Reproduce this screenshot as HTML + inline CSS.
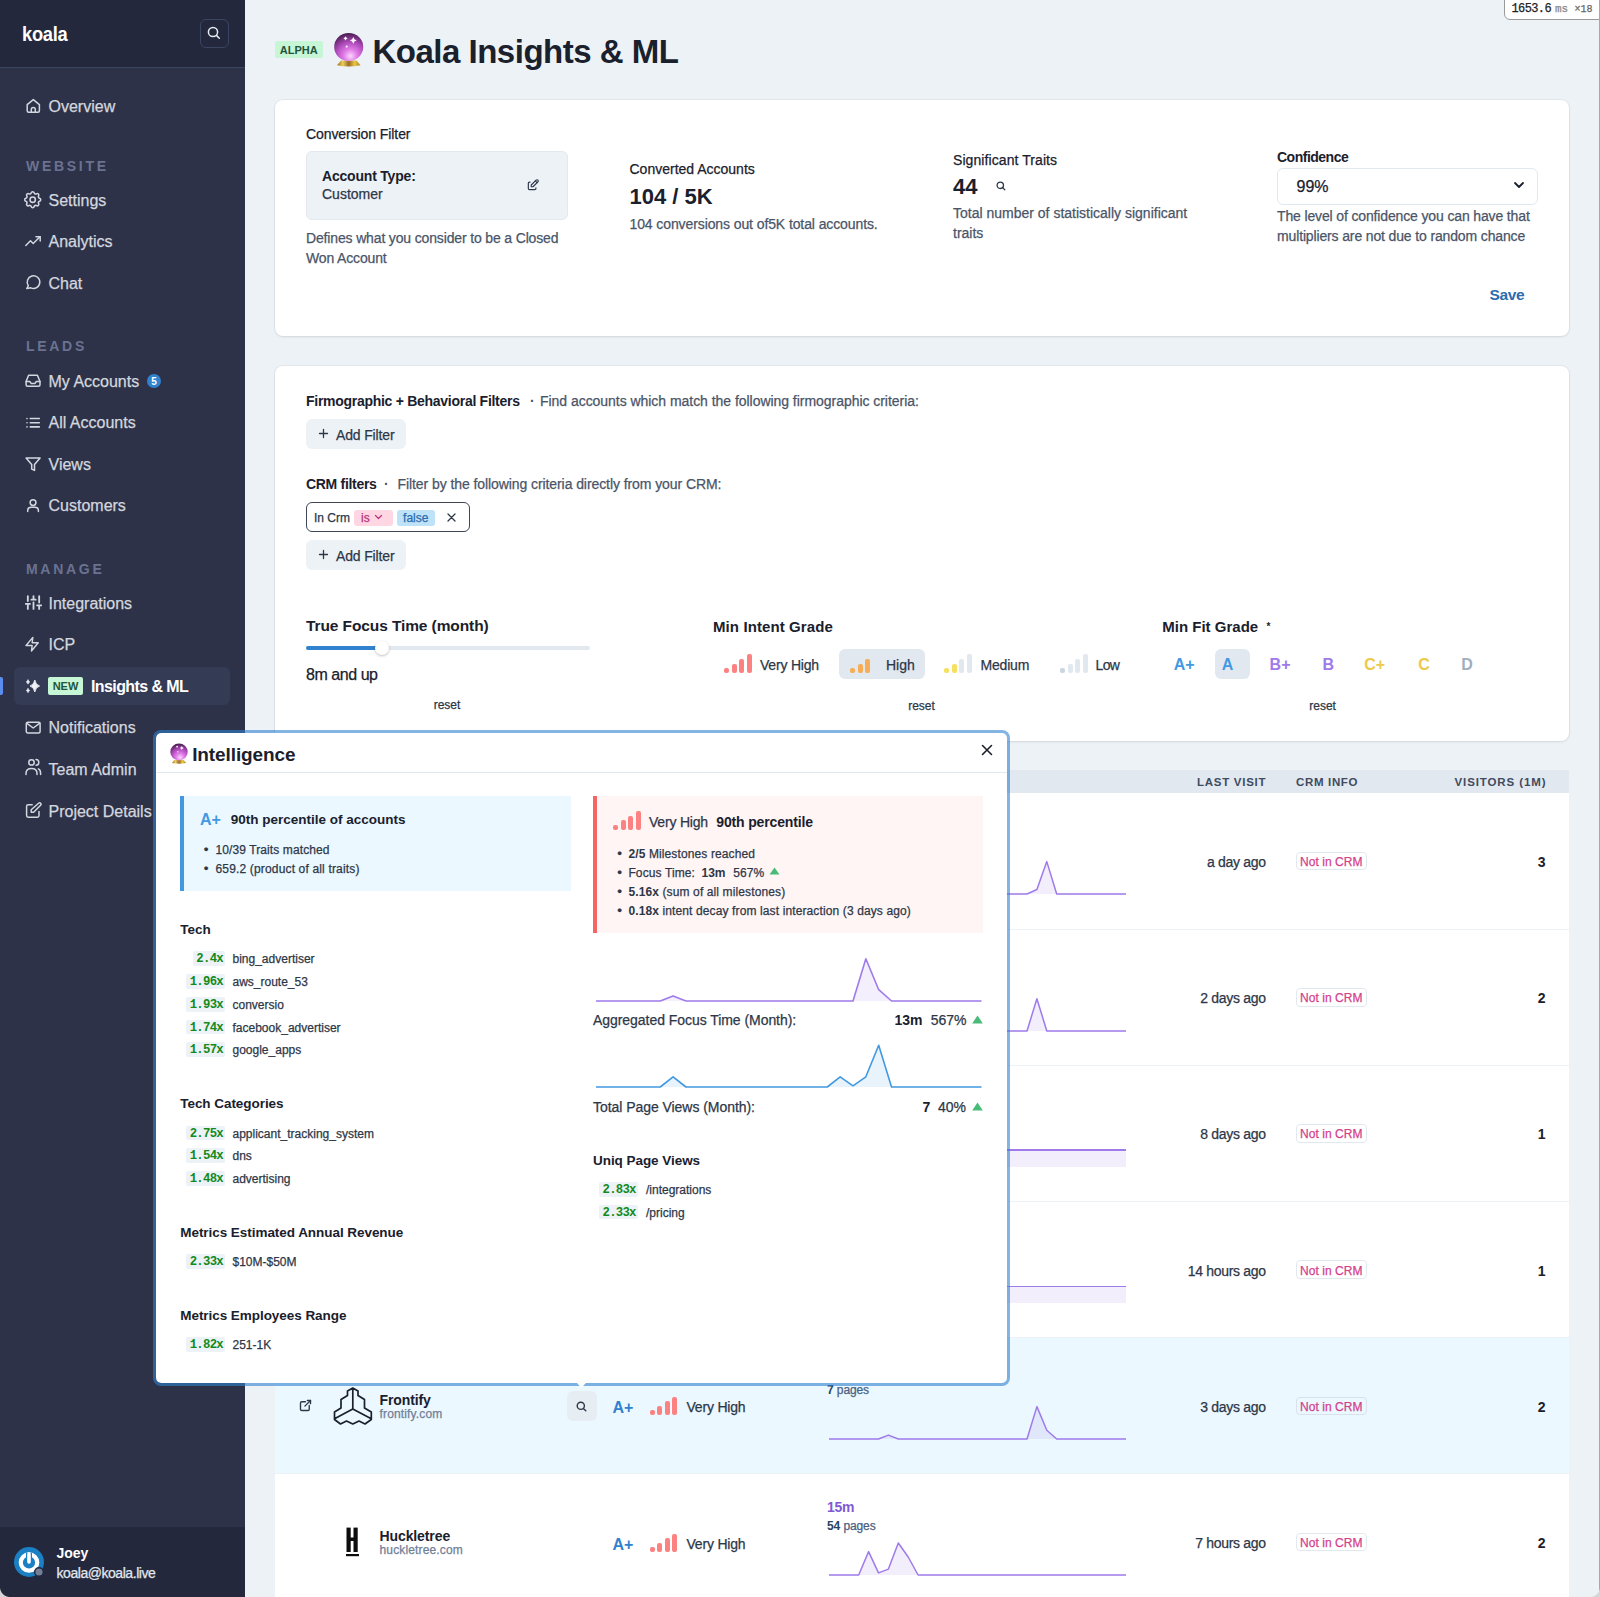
<!DOCTYPE html>
<html><head><meta charset="utf-8"><title>Koala Insights &amp; ML</title>
<style>
html,body{margin:0;padding:0;}
body{width:1600px;height:1597px;overflow:hidden;position:relative;background:#edf2f7;font-family:"Liberation Sans", sans-serif;-webkit-font-smoothing:antialiased;}
.t{position:absolute;line-height:1;white-space:nowrap;-webkit-text-stroke:0.25px currentColor;}
.r{position:absolute;display:block;}
b{font-weight:700;-webkit-text-stroke:0;}
.corner{position:absolute;width:10px;height:10px;}
</style></head><body>
<div id="page" style="position:absolute;left:0;top:0;width:1600px;height:1597px;overflow:hidden;">
<div class="r" style="left:0px;top:0px;width:245px;height:1597px;background:#2d3248;"></div>
<div class="r" style="left:0px;top:0px;width:245px;height:67px;background:#23283d;"></div>
<div class="r" style="left:0px;top:67px;width:245px;height:1px;background:#3a4561;"></div>
<div class="t" style="left:22px;top:23.87px;font-size:20px;color:#ffffff;font-weight:700;-webkit-text-stroke:0;letter-spacing:-0.3px;transform:scaleX(0.915);transform-origin:0 0;">koala</div>
<div class="r" style="left:199.5px;top:18.5px;width:29.5px;height:29.5px;background:transparent;border:1.3px solid #3a4562;border-radius:6px;box-sizing:border-box;"></div>
<svg class="r" style="left:207px;top:26px;" width="14" height="14" viewBox="0 0 14 14" fill="none"><circle cx="6" cy="6" r="4.6" stroke="#e8eaf0" stroke-width="1.5"/><path d="M9.4 9.4L12.3 12.3" stroke="#e8eaf0" stroke-width="1.5" stroke-linecap="round"/></svg>
<div class="t" style="left:26px;top:158.65px;font-size:14px;color:#6b7291;font-weight:700;-webkit-text-stroke:0;letter-spacing:2.7px;">WEBSITE</div>
<div class="t" style="left:26px;top:339.45px;font-size:14px;color:#6b7291;font-weight:700;-webkit-text-stroke:0;letter-spacing:2.7px;">LEADS</div>
<div class="t" style="left:26px;top:562.05px;font-size:14px;color:#6b7291;font-weight:700;-webkit-text-stroke:0;letter-spacing:2.7px;">MANAGE</div>
<div class="t" style="left:48.5px;top:99.16px;font-size:16px;color:#d4d7df;">Overview</div>
<div class="t" style="left:48.5px;top:192.86px;font-size:16px;color:#d4d7df;">Settings</div>
<div class="t" style="left:48.5px;top:234.36px;font-size:16px;color:#d4d7df;">Analytics</div>
<div class="t" style="left:48.5px;top:276.36px;font-size:16px;color:#d4d7df;">Chat</div>
<div class="t" style="left:48.5px;top:373.76px;font-size:16px;color:#d4d7df;">My Accounts</div>
<div class="t" style="left:48.5px;top:415.06px;font-size:16px;color:#d4d7df;">All Accounts</div>
<div class="t" style="left:48.5px;top:456.76px;font-size:16px;color:#d4d7df;">Views</div>
<div class="t" style="left:48.5px;top:498.36px;font-size:16px;color:#d4d7df;">Customers</div>
<div class="t" style="left:48.5px;top:595.86px;font-size:16px;color:#d4d7df;">Integrations</div>
<div class="t" style="left:48.5px;top:637.16px;font-size:16px;color:#d4d7df;">ICP</div>
<div class="t" style="left:48.5px;top:720.36px;font-size:16px;color:#d4d7df;">Notifications</div>
<div class="t" style="left:48.5px;top:762.36px;font-size:16px;color:#d4d7df;">Team Admin</div>
<div class="t" style="left:48.5px;top:803.86px;font-size:16px;color:#d4d7df;">Project Details</div>
<svg class="r" style="left:24px;top:96px" width="20" height="20" viewBox="0 0 20 20" fill="none" stroke="#d4d7df" stroke-width="1.5" stroke-linecap="round" stroke-linejoin="round"><path d="M3.2 8.6 L9.3 3.6 L15.4 8.6 V14.8 Q15.4 16.3 13.9 16.3 H4.7 Q3.2 16.3 3.2 14.8 Z"/><path d="M7.3 16.3 V13.6 A2 2 0 0 1 11.3 13.6 V16.3"/></svg>
<svg class="r" style="left:22.3px;top:188.8px" width="21.4" height="21.4" viewBox="0 0 24 24" fill="none" stroke="#d4d7df" stroke-width="1.75" stroke-linecap="round" stroke-linejoin="round"><path d="M10.325 4.317c.426-1.756 2.924-1.756 3.35 0a1.724 1.724 0 0 0 2.573 1.066c1.543-.94 3.31.826 2.37 2.37a1.724 1.724 0 0 0 1.065 2.572c1.756.426 1.756 2.924 0 3.35a1.724 1.724 0 0 0-1.066 2.573c.94 1.543-.826 3.31-2.37 2.37a1.724 1.724 0 0 0-2.572 1.065c-.426 1.756-2.924 1.756-3.35 0a1.724 1.724 0 0 0-2.573-1.066c-1.543.94-3.31-.826-2.37-2.37a1.724 1.724 0 0 0-1.065-2.572c-1.756-.426-1.756-2.924 0-3.35a1.724 1.724 0 0 0 1.066-2.573c-.94-1.543.826-3.31 2.37-2.37 1 .608 2.296.07 2.572-1.065z"/><circle cx="12" cy="12" r="3"/></svg>
<svg class="r" style="left:24px;top:232px" width="20" height="20" viewBox="0 0 20 20" fill="none" stroke="#d4d7df" stroke-width="1.5" stroke-linecap="round" stroke-linejoin="round"><path d="M1.8 13.5 L6.5 8.8 L9.2 11.5 L16 4.8"/><path d="M12 4.8 H16.2 V9"/></svg>
<svg class="r" style="left:24px;top:273px" width="20" height="20" viewBox="0 0 20 20" fill="none" stroke="#d4d7df" stroke-width="1.5" stroke-linecap="round" stroke-linejoin="round"><path d="M2.8 15.6 L4.34 12.71 A6.3 6.3 0 1 1 6.84 14.81 Z"/></svg>
<svg class="r" style="left:24px;top:372px" width="20" height="20" viewBox="0 0 20 20" fill="none" stroke="#d4d7df" stroke-width="1.5" stroke-linecap="round" stroke-linejoin="round"><path d="M4.6 3.2 H13.4 L16 9.5 V12.7 Q16 14.2 14.5 14.2 H3.6 Q2.1 14.2 2.1 12.7 V9.5 Z"/><path d="M2.1 9.5 H5.8 L7.3 11.6 H10.8 L12.3 9.5 H16"/></svg>
<svg class="r" style="left:24px;top:412px" width="20" height="20" viewBox="0 0 20 20" fill="none" stroke="#d4d7df" stroke-width="1.6" stroke-linecap="round" stroke-linejoin="round"><path d="M6.3 6.5 H15.3 M6.3 10.7 H15.3 M6.3 14.9 H15.3"/><path d="M3 6.5 V6.6 M3 10.7 V10.8 M3 14.9 V15"/></svg>
<svg class="r" style="left:24px;top:455px" width="20" height="20" viewBox="0 0 20 20" fill="none" stroke="#d4d7df" stroke-width="1.5" stroke-linecap="round" stroke-linejoin="round"><path d="M2.1 3 H16.1 L10.5 9.6 V15.4 L7.7 14.1 V9.6 Z"/></svg>
<svg class="r" style="left:24px;top:496px" width="20" height="20" viewBox="0 0 20 20" fill="none" stroke="#d4d7df" stroke-width="1.5" stroke-linecap="round" stroke-linejoin="round"><circle cx="9.05" cy="6.6" r="2.9"/><path d="M3.7 15.6 V14.6 Q3.7 11.3 7.2 11.3 H10.9 Q14.4 11.3 14.4 14.6 V15.6"/></svg>
<svg class="r" style="left:24.6px;top:594.1px" width="17" height="17" viewBox="0 0 24 24" fill="none" stroke="#d4d7df" stroke-width="2.6" stroke-linecap="round" stroke-linejoin="round"><path d="M4 21v-7M4 10V3M12 21v-9M12 8V3M20 21v-5M20 12V3M1 14h6M9 8h6M17 16h6"/></svg>
<svg class="r" style="left:24.26px;top:636.24px" width="16.3" height="16.3" viewBox="0 0 24 24" fill="none" stroke="#d4d7df" stroke-width="2.1" stroke-linecap="round" stroke-linejoin="round"><path d="M13 2 L3 14 H12 L11 22 L21 10 H12 L13 2 Z"/></svg>
<svg class="r" style="left:24px;top:719px" width="20" height="20" viewBox="0 0 20 20" fill="none" stroke="#d4d7df" stroke-width="1.5" stroke-linecap="round" stroke-linejoin="round"><rect x="2.3" y="3.3" width="13.8" height="10.7" rx="1.5"/><path d="M2.6 4.2 L9.2 9 L15.8 4.2"/></svg>
<svg class="r" style="left:24px;top:756px" width="20" height="20" viewBox="0 0 20 20" fill="none" stroke="#d4d7df" stroke-width="1.5" stroke-linecap="round" stroke-linejoin="round"><circle cx="7.5" cy="6.4" r="2.7"/><path d="M2 18.6 V17.6 Q2 12.6 7.5 12.6 Q13 12.6 13 17.6 V18.6"/><path d="M12 3.6 A2.8 2.8 0 0 1 12 9.2"/><path d="M14.4 12.9 Q16.6 13.8 16.6 17.4 V18.6"/></svg>
<svg class="r" style="left:24px;top:800px" width="20" height="20" viewBox="0 0 20 20" fill="none" stroke="#d4d7df" stroke-width="1.5" stroke-linecap="round" stroke-linejoin="round"><path d="M8.2 4.8 H4.2 Q2.6 4.8 2.6 6.4 V15.6 Q2.6 17.2 4.2 17.2 H13.4 Q15 17.2 15 15.6 V11.4"/><path d="M14.6 3.2 Q15.6 2.2 16.6 3.2 Q17.6 4.2 16.6 5.2 L9.6 12.2 H7.2 V9.8 Z"/></svg>
<div class="r" style="left:147px;top:374px;width:14px;height:14px;background:#3182ce;border-radius:7px;"></div>
<div class="t" style="left:-46px;width:400px;text-align:center;top:376.64px;font-size:10px;color:#ffffff;font-weight:700;-webkit-text-stroke:0;">5</div>
<div class="r" style="left:14px;top:667px;width:215.5px;height:37.5px;background:#333b55;border-radius:6px;"></div>
<div class="r" style="left:0px;top:677px;width:3px;height:18px;background:#5b8def;border-radius:0 2px 2px 0;"></div>
<svg class="r" style="left:24px;top:677px;" width="18" height="18" viewBox="0 0 18 18" fill="none"><path d="M10.8 3 Q11.6 7.9 15.6 9 Q11.6 10.1 10.8 15 Q10 10.1 6 9 Q10 7.9 10.8 3Z" fill="#f2f3f7" stroke="#f2f3f7" stroke-width="0.9" stroke-linejoin="round"/><path d="M4 2.6 Q4.4 4.5 5.8 4.9 Q4.4 5.3 4 7.2 Q3.6 5.3 2.2 4.9 Q3.6 4.5 4 2.6Z" fill="#f2f3f7" stroke="#f2f3f7" stroke-width="0.6"/><path d="M4 11.2 Q4.4 13.1 5.8 13.5 Q4.4 13.9 4 15.8 Q3.6 13.9 2.2 13.5 Q3.6 13.1 4 11.2Z" fill="#f2f3f7" stroke="#f2f3f7" stroke-width="0.6"/></svg>
<div class="r" style="left:48px;top:677px;width:35px;height:17.5px;background:#c6f6d5;border-radius:2px;"></div>
<div class="t" style="left:-134.5px;width:400px;text-align:center;top:681.29px;font-size:11px;color:#22543d;font-weight:700;-webkit-text-stroke:0;">NEW</div>
<div class="t" style="left:91px;top:678.76px;font-size:16px;color:#ffffff;font-weight:700;-webkit-text-stroke:0;letter-spacing:-0.6px;">Insights &amp; ML</div>
<div class="r" style="left:0px;top:1526.5px;width:245px;height:71px;background:#23283d;"></div>
<svg class="r" style="left:14px;top:1547px;" width="31" height="31" viewBox="0 0 31 31" fill="none"><circle cx="15" cy="15" r="15" fill="#1b7fc4"/><circle cx="15" cy="15.5" r="8.2" stroke="#ffffff" stroke-width="4.2"/><path d="M15 6v9" stroke="#1b7fc4" stroke-width="6"/><path d="M15 7v8" stroke="#ffffff" stroke-width="3.6" stroke-linecap="round"/><circle cx="25" cy="25" r="4.3" fill="#718096" stroke="#23283d" stroke-width="1.5"/></svg>
<div class="t" style="left:56.5px;top:1546.25px;font-size:14px;color:#ffffff;font-weight:700;-webkit-text-stroke:0;">Joey</div>
<div class="t" style="left:56.5px;top:1565.75px;font-size:14px;color:#e2e8f0;letter-spacing:-0.45px;">koala@koala.live</div>
<div class="r" style="left:275px;top:41px;width:47.5px;height:16.5px;background:#c6f6d5;border-radius:2px;"></div>
<div class="t" style="left:98.75px;width:400px;text-align:center;top:44.89px;font-size:11px;color:#22543d;font-weight:700;-webkit-text-stroke:0;">ALPHA</div>
<svg class="r" style="left:331.5px;top:32px;" width="34" height="36" viewBox="0 0 34 36" fill="none"><defs><radialGradient id="tb" cx="0.56" cy="0.82" r="0.8"><stop offset="0" stop-color="#fbd6fc"/><stop offset="0.3" stop-color="#e07be6"/><stop offset="0.62" stop-color="#b04bbd"/><stop offset="0.9" stop-color="#6a2a72"/><stop offset="1" stop-color="#4a1f52"/></radialGradient><linearGradient id="tg" x1="0" y1="0" x2="1" y2="0"><stop offset="0" stop-color="#a8681a"/><stop offset="0.25" stop-color="#e8d060"/><stop offset="0.5" stop-color="#9c6a24"/><stop offset="0.75" stop-color="#e6c84a"/><stop offset="1" stop-color="#b08420"/></linearGradient></defs><path d="M9 28.4 L24.5 28.4 L28.5 33.2 Q16.8 35.6 5 33.2 Z" fill="url(#tg)"/><ellipse cx="16.7" cy="15" rx="14.5" ry="14" fill="url(#tb)"/><path d="M13.5 4.3 l0.8 1.3 1.3 0.8 -1.3 0.8 -0.8 1.3 -0.8 -1.3 -1.3 -0.8 1.3 -0.8z" fill="#fff"/><path d="M21.3 5 l1.2 2.2 2.2 1.2 -2.2 1.2 -1.2 2.2 -1.2 -2.2 -2.2 -1.2 2.2 -1.2z" fill="#fff" opacity="0.95"/><circle cx="14.7" cy="14.6" r="1.1" fill="#fff" opacity="0.9"/></svg>
<div class="t" style="left:372.5px;top:35.17px;font-size:33px;color:#1a202c;font-weight:700;-webkit-text-stroke:0;letter-spacing:-0.5px;">Koala Insights &amp; ML</div>
<div class="r" style="left:275px;top:100px;width:1293.5px;height:235.5px;background:#fff;background:#fff;border-radius:8px;box-shadow:0 0 0 1px rgba(0,0,0,0.04),0 1px 3px rgba(0,0,0,0.08);"></div>
<div class="t" style="left:306px;top:126.75px;font-size:14px;color:#1a202c;letter-spacing:-0.08px;">Conversion Filter</div>
<div class="r" style="left:306px;top:150.5px;width:262px;height:69px;background:#edf2f7;border:1px solid #e2e8f0;border-radius:6px;box-sizing:border-box;"></div>
<div class="t" style="left:322px;top:169.35px;font-size:14px;color:#1a202c;font-weight:700;-webkit-text-stroke:0;letter-spacing:-0.2px;">Account Type:</div>
<div class="t" style="left:322px;top:187.25px;font-size:14px;color:#2d3748;">Customer</div>
<svg class="r" style="left:526px;top:178px;" width="14" height="14" viewBox="0 0 24 24" fill="none" stroke="#2d3748" stroke-width="2" stroke-linecap="round" stroke-linejoin="round"><path d="M7 7H6a2 2 0 0 0-2 2v9a2 2 0 0 0 2 2h9a2 2 0 0 0 2-2v-1"/><path d="M20.385 6.585a2.1 2.1 0 0 0-2.97-2.97L9 12v3h3l8.385-8.415z"/><path d="M16 5l3 3"/></svg>
<div class="t" style="left:306px;top:230.95px;font-size:14px;color:#4a5568;letter-spacing:-0.15px;">Defines what you consider to be a Closed</div>
<div class="t" style="left:306px;top:250.75px;font-size:14px;color:#4a5568;letter-spacing:-0.15px;">Won Account</div>
<div class="t" style="left:629.5px;top:162.15px;font-size:14px;color:#1a202c;">Converted Accounts</div>
<div class="t" style="left:629.5px;top:185.78px;font-size:22px;color:#1a202c;font-weight:700;-webkit-text-stroke:0;">104 / 5K</div>
<div class="t" style="left:629.5px;top:216.05px;font-size:14px;color:#4a5568;letter-spacing:-0.1px;margin-top:1px;">104 conversions out of5K total accounts.</div>
<div class="t" style="left:953px;top:152.95px;font-size:14px;color:#1a202c;letter-spacing:0.08px;">Significant Traits</div>
<div class="t" style="left:953px;top:175.78px;font-size:22px;color:#1a202c;font-weight:700;-webkit-text-stroke:0;">44</div>
<svg class="r" style="left:996px;top:181px;" width="10" height="10" viewBox="0 0 10 10" fill="none"><circle cx="4.3" cy="4.3" r="3.2" stroke="#2d3748" stroke-width="1.3"/><path d="M6.6 6.6L8.8 8.8" stroke="#2d3748" stroke-width="1.3" stroke-linecap="round"/></svg>
<div class="t" style="left:953px;top:206.05px;font-size:14px;color:#4a5568;">Total number of statistically significant</div>
<div class="t" style="left:953px;top:225.95px;font-size:14px;color:#4a5568;">traits</div>
<div class="t" style="left:1277px;top:150.35px;font-size:14px;color:#1a202c;font-weight:700;-webkit-text-stroke:0;letter-spacing:-0.5px;">Confidence</div>
<div class="r" style="left:1277px;top:168px;width:261px;height:36.5px;background:#fff;border:1px solid #e2e8f0;border-radius:6px;box-sizing:border-box;"></div>
<div class="t" style="left:1296.5px;top:178.66px;font-size:16px;color:#1a202c;">99%</div>
<svg class="r" style="left:1513px;top:181px;" width="12" height="9" viewBox="0 0 12 9" fill="none"><path d="M2 2L6 6L10 2" stroke="#1a202c" stroke-width="1.8" stroke-linecap="round" stroke-linejoin="round"/></svg>
<div class="t" style="left:1277px;top:209.05px;font-size:14px;color:#4a5568;letter-spacing:-0.14px;">The level of confidence you can have that</div>
<div class="t" style="left:1277px;top:229.05px;font-size:14px;color:#4a5568;letter-spacing:-0.14px;">multipliers are not due to random chance</div>
<div class="t" style="left:1489.5px;top:287.28px;font-size:15.5px;color:#2b6cb0;font-weight:700;-webkit-text-stroke:0;letter-spacing:-0.4px;">Save</div>
<div class="r" style="left:275px;top:366px;width:1293.5px;height:374.5px;background:#fff;background:#fff;border-radius:8px;box-shadow:0 0 0 1px rgba(0,0,0,0.04),0 1px 3px rgba(0,0,0,0.08);"></div>
<div class="t" style="left:306px;top:393.75px;font-size:14px;color:#1a202c;font-weight:700;-webkit-text-stroke:0;letter-spacing:-0.28px;">Firmographic + Behavioral Filters</div>
<div class="t" style="left:530px;top:393.75px;font-size:14px;color:#4a5568;font-weight:700;-webkit-text-stroke:0;">·</div>
<div class="t" style="left:540px;top:393.75px;font-size:14px;color:#4a5568;letter-spacing:-0.04px;">Find accounts which match the following firmographic criteria:</div>
<div class="r" style="left:306px;top:419px;width:100px;height:30px;background:#edf2f7;border-radius:6px;"></div>
<svg class="r" style="left:318px;top:428px;" width="11" height="11" viewBox="0 0 11 11" fill="none"><path d="M5.5 1.5v8M1.5 5.5h8" stroke="#2d3748" stroke-width="1.3" stroke-linecap="round"/></svg>
<div class="t" style="left:336px;top:427.75px;font-size:14px;color:#2d3748;letter-spacing:-0.15px;">Add Filter</div>
<div class="t" style="left:306px;top:477.25px;font-size:14px;color:#1a202c;font-weight:700;-webkit-text-stroke:0;letter-spacing:-0.3px;">CRM filters</div>
<div class="t" style="left:384px;top:477.25px;font-size:14px;color:#4a5568;font-weight:700;-webkit-text-stroke:0;">·</div>
<div class="t" style="left:397.5px;top:477.25px;font-size:14px;color:#4a5568;letter-spacing:-0.08px;">Filter by the following criteria directly from your CRM:</div>
<div class="r" style="left:306px;top:502px;width:163.5px;height:30px;background:#fff;border:1.5px solid #3d4757;border-radius:6px;box-sizing:border-box;"></div>
<div class="t" style="left:314px;top:511.94px;font-size:12px;color:#2d3748;">In Crm</div>
<div class="r" style="left:354px;top:509.5px;width:38.5px;height:16px;background:#fed7e2;border-radius:3px;"></div>
<div class="t" style="left:361px;top:511.94px;font-size:12px;color:#b83280;">is</div>
<svg class="r" style="left:374px;top:513px;" width="9" height="8" viewBox="0 0 9 8" fill="none"><path d="M1.5 2.5L4.5 5.5L7.5 2.5" stroke="#b83280" stroke-width="1.2" stroke-linecap="round" stroke-linejoin="round"/></svg>
<div class="r" style="left:397px;top:509.5px;width:37.5px;height:16px;background:#bee3f8;border-radius:3px;"></div>
<div class="t" style="left:215.75px;width:400px;text-align:center;top:511.94px;font-size:12px;color:#2b6cb0;">false</div>
<svg class="r" style="left:446px;top:512px;" width="11" height="11" viewBox="0 0 11 11" fill="none"><path d="M2 2L9 9M9 2L2 9" stroke="#2d3748" stroke-width="1.3" stroke-linecap="round"/></svg>
<div class="r" style="left:306px;top:540px;width:100px;height:30px;background:#edf2f7;border-radius:6px;"></div>
<svg class="r" style="left:318px;top:549px;" width="11" height="11" viewBox="0 0 11 11" fill="none"><path d="M5.5 1.5v8M1.5 5.5h8" stroke="#2d3748" stroke-width="1.3" stroke-linecap="round"/></svg>
<div class="t" style="left:336px;top:548.75px;font-size:14px;color:#2d3748;letter-spacing:-0.15px;">Add Filter</div>
<div class="t" style="left:306px;top:618.48px;font-size:15.5px;color:#1a202c;font-weight:700;-webkit-text-stroke:0;letter-spacing:-0.1px;">True Focus Time (month)</div>
<div class="r" style="left:306px;top:646px;width:283.5px;height:4px;background:#e2e8f0;border-radius:2px;"></div>
<div class="r" style="left:306px;top:646px;width:75px;height:4px;background:#3182ce;border-radius:2px;"></div>
<div class="r" style="left:374.5px;top:641px;width:14px;height:14px;background:#fff;border-radius:7px;box-shadow:0 1px 2.5px rgba(0,0,0,0.25);"></div>
<div class="t" style="left:306px;top:666.56px;font-size:16px;color:#1a202c;letter-spacing:-0.45px;">8m and up</div>
<div class="t" style="left:247px;width:400px;text-align:center;top:699.04px;font-size:12px;color:#2d3748;">reset</div>
<div class="t" style="left:713px;top:618.50px;font-size:15px;color:#1a202c;font-weight:700;-webkit-text-stroke:0;letter-spacing:0.1px;">Min Intent Grade</div>
<div class="r" style="left:724.0px;top:668px;width:5.3px;height:5px;background:#fc8181;border-radius:2px;"></div>
<div class="r" style="left:731.5px;top:663.6px;width:5.3px;height:9.4px;background:#fc8181;border-radius:2px;"></div>
<div class="r" style="left:739.0px;top:659px;width:5.3px;height:14px;background:#fc8181;border-radius:2px;"></div>
<div class="r" style="left:746.5px;top:654.4px;width:5.3px;height:18.6px;background:#fc8181;border-radius:2px;"></div>
<div class="t" style="left:760px;top:658.15px;font-size:14px;color:#2d3748;letter-spacing:-0.2px;">Very High</div>
<div class="r" style="left:838.5px;top:649px;width:86.5px;height:30px;background:#e2e8f0;border-radius:6px;"></div>
<div class="r" style="left:850.0px;top:668px;width:5.3px;height:5px;background:#f6ad55;border-radius:2px;"></div>
<div class="r" style="left:857.5px;top:663.6px;width:5.3px;height:9.4px;background:#f6ad55;border-radius:2px;"></div>
<div class="r" style="left:865.0px;top:659px;width:5.3px;height:14px;background:#f6ad55;border-radius:2px;"></div>
<div class="r" style="left:872.5px;top:654.4px;width:5.3px;height:18.6px;background:#e2e8f0;border-radius:2px;"></div>
<div class="t" style="left:886px;top:658.15px;font-size:14px;color:#2d3748;">High</div>
<div class="r" style="left:944.0px;top:668px;width:5.3px;height:5px;background:#f6e05e;border-radius:2px;"></div>
<div class="r" style="left:951.5px;top:663.6px;width:5.3px;height:9.4px;background:#f6e05e;border-radius:2px;"></div>
<div class="r" style="left:959.0px;top:659px;width:5.3px;height:14px;background:#e2e8f0;border-radius:2px;"></div>
<div class="r" style="left:966.5px;top:654.4px;width:5.3px;height:18.6px;background:#e2e8f0;border-radius:2px;"></div>
<div class="t" style="left:980.5px;top:658.15px;font-size:14px;color:#2d3748;letter-spacing:-0.2px;">Medium</div>
<div class="r" style="left:1060.0px;top:668px;width:5.3px;height:5px;background:#cbd5e0;border-radius:2px;"></div>
<div class="r" style="left:1067.5px;top:663.6px;width:5.3px;height:9.4px;background:#e2e8f0;border-radius:2px;"></div>
<div class="r" style="left:1075.0px;top:659px;width:5.3px;height:14px;background:#e2e8f0;border-radius:2px;"></div>
<div class="r" style="left:1082.5px;top:654.4px;width:5.3px;height:18.6px;background:#e2e8f0;border-radius:2px;"></div>
<div class="t" style="left:1095.5px;top:658.15px;font-size:14px;color:#2d3748;letter-spacing:-0.6px;">Low</div>
<div class="t" style="left:721.5px;width:400px;text-align:center;top:700.04px;font-size:12px;color:#2d3748;">reset</div>
<div class="t" style="left:1162.3px;top:618.80px;font-size:15px;color:#1a202c;font-weight:700;-webkit-text-stroke:0;">Min Fit Grade</div>
<div class="t" style="left:1266.5px;top:622.13px;font-size:10px;color:#1a202c;font-weight:700;-webkit-text-stroke:0;">*</div>
<div class="r" style="left:1215px;top:649px;width:35px;height:30px;background:#e2e8f0;border-radius:6px;"></div>
<div class="t" style="left:1173.8px;top:657.46px;font-size:16px;color:#4299e1;font-weight:700;-webkit-text-stroke:0;">A+</div>
<div class="t" style="left:1221.7px;top:657.46px;font-size:16px;color:#4299e1;font-weight:700;-webkit-text-stroke:0;">A</div>
<div class="t" style="left:1269.6px;top:657.46px;font-size:16px;color:#9f7aea;font-weight:700;-webkit-text-stroke:0;">B+</div>
<div class="t" style="left:1322.5px;top:657.46px;font-size:16px;color:#9f7aea;font-weight:700;-webkit-text-stroke:0;">B</div>
<div class="t" style="left:1364.2px;top:657.46px;font-size:16px;color:#ecc94b;font-weight:700;-webkit-text-stroke:0;">C+</div>
<div class="t" style="left:1418.2px;top:657.46px;font-size:16px;color:#ecc94b;font-weight:700;-webkit-text-stroke:0;">C</div>
<div class="t" style="left:1461.3px;top:657.46px;font-size:16px;color:#a0aec0;font-weight:700;-webkit-text-stroke:0;">D</div>
<div class="t" style="left:1122.6px;width:400px;text-align:center;top:700.04px;font-size:12px;color:#2d3748;">reset</div>
<div class="r" style="left:275px;top:770px;width:1293.5px;height:23px;background:#e2e8f0;"></div>
<div class="t" style="right:334.5px;top:776.87px;font-size:11.5px;color:#3f4b5e;font-weight:700;-webkit-text-stroke:0;letter-spacing:0.72px;margin-right:-0.7px;">LAST VISIT</div>
<div class="t" style="left:1296px;top:776.87px;font-size:11.5px;color:#3f4b5e;font-weight:700;-webkit-text-stroke:0;letter-spacing:0.66px;">CRM INFO</div>
<div class="t" style="right:54.5px;top:776.87px;font-size:11.5px;color:#3f4b5e;font-weight:700;-webkit-text-stroke:0;letter-spacing:0.89px;margin-right:-0.9px;">VISITORS (1M)</div>
<div class="r" style="left:275px;top:793px;width:1293.5px;height:136.5px;background:#ffffff;"></div>
<div class="r" style="left:275px;top:928.5px;width:1293.5px;height:1px;background:#edf2f7;"></div>
<div class="t" style="right:334.5px;top:855.00px;font-size:14px;color:#2d3748;letter-spacing:-0.3px;margin-right:-0.3px;">a day ago</div>
<div class="r" style="left:1296px;top:851.75px;width:70.5px;height:18.5px;background:transparent;border:1px solid #e2e8f0;border-radius:4px;box-sizing:border-box;background:#fff;"></div>
<div class="t" style="left:1131.25px;width:400px;text-align:center;top:856.09px;font-size:12px;color:#d53f8c;letter-spacing:0.05px;">Not in CRM</div>
<div class="t" style="right:54.5px;top:855.00px;font-size:14px;color:#1a202c;font-weight:700;-webkit-text-stroke:0;">3</div>
<svg class="r" style="left:827.6px;top:844.35px" width="299" height="54" fill="none"><path d="M1.00,50.00 L10.90,50.00 L20.80,50.00 L30.70,50.00 L40.60,50.00 L50.50,50.00 L60.40,50.00 L70.30,50.00 L80.20,50.00 L90.10,50.00 L100.00,50.00 L109.90,50.00 L119.80,50.00 L129.70,50.00 L139.60,50.00 L149.50,50.00 L159.40,50.00 L169.30,50.00 L179.20,50.00 L189.10,50.00 L199.00,50.00 L208.90,45.50 L218.80,17.60 L228.70,50.00 L238.60,50.00 L248.50,50.00 L258.40,50.00 L268.30,50.00 L278.20,50.00 L288.10,50.00 L298.00,50.00 L298.00,50 L1,50 Z" fill="rgba(128,90,213,0.1)"/><path d="M1.00,50.00 L10.90,50.00 L20.80,50.00 L30.70,50.00 L40.60,50.00 L50.50,50.00 L60.40,50.00 L70.30,50.00 L80.20,50.00 L90.10,50.00 L100.00,50.00 L109.90,50.00 L119.80,50.00 L129.70,50.00 L139.60,50.00 L149.50,50.00 L159.40,50.00 L169.30,50.00 L179.20,50.00 L189.10,50.00 L199.00,50.00 L208.90,45.50 L218.80,17.60 L228.70,50.00 L238.60,50.00 L248.50,50.00 L258.40,50.00 L268.30,50.00 L278.20,50.00 L288.10,50.00 L298.00,50.00" stroke="#9f7aea" stroke-width="1.5" stroke-linejoin="round"/></svg>
<div class="r" style="left:299.5px;top:855.25px;width:12px;height:12px;background:transparent;"></div>
<div class="r" style="left:275px;top:929.5px;width:1293.5px;height:136.0px;background:#ffffff;"></div>
<div class="r" style="left:275px;top:1064.5px;width:1293.5px;height:1px;background:#edf2f7;"></div>
<div class="t" style="right:334.5px;top:991.25px;font-size:14px;color:#2d3748;letter-spacing:-0.3px;margin-right:-0.3px;">2 days ago</div>
<div class="r" style="left:1296px;top:988.0px;width:70.5px;height:18.5px;background:transparent;border:1px solid #e2e8f0;border-radius:4px;box-sizing:border-box;background:#fff;"></div>
<div class="t" style="left:1131.25px;width:400px;text-align:center;top:992.34px;font-size:12px;color:#d53f8c;letter-spacing:0.05px;">Not in CRM</div>
<div class="t" style="right:54.5px;top:991.25px;font-size:14px;color:#1a202c;font-weight:700;-webkit-text-stroke:0;">2</div>
<svg class="r" style="left:827.6px;top:980.5999999999999px" width="299" height="54" fill="none"><path d="M1.00,50.00 L10.90,50.00 L20.80,50.00 L30.70,50.00 L40.60,50.00 L50.50,50.00 L60.40,50.00 L70.30,50.00 L80.20,50.00 L90.10,50.00 L100.00,50.00 L109.90,50.00 L119.80,50.00 L129.70,50.00 L139.60,50.00 L149.50,50.00 L159.40,50.00 L169.30,50.00 L179.20,50.00 L189.10,50.00 L199.00,50.00 L208.90,17.70 L218.80,50.00 L228.70,50.00 L238.60,50.00 L248.50,50.00 L258.40,50.00 L268.30,50.00 L278.20,50.00 L288.10,50.00 L298.00,50.00 L298.00,50 L1,50 Z" fill="rgba(128,90,213,0.1)"/><path d="M1.00,50.00 L10.90,50.00 L20.80,50.00 L30.70,50.00 L40.60,50.00 L50.50,50.00 L60.40,50.00 L70.30,50.00 L80.20,50.00 L90.10,50.00 L100.00,50.00 L109.90,50.00 L119.80,50.00 L129.70,50.00 L139.60,50.00 L149.50,50.00 L159.40,50.00 L169.30,50.00 L179.20,50.00 L189.10,50.00 L199.00,50.00 L208.90,17.70 L218.80,50.00 L228.70,50.00 L238.60,50.00 L248.50,50.00 L258.40,50.00 L268.30,50.00 L278.20,50.00 L288.10,50.00 L298.00,50.00" stroke="#9f7aea" stroke-width="1.5" stroke-linejoin="round"/></svg>
<div class="r" style="left:299.5px;top:991.5px;width:12px;height:12px;background:transparent;"></div>
<div class="r" style="left:275px;top:1065.5px;width:1293.5px;height:136.0px;background:#ffffff;"></div>
<div class="r" style="left:275px;top:1200.5px;width:1293.5px;height:1px;background:#edf2f7;"></div>
<div class="t" style="right:334.5px;top:1127.25px;font-size:14px;color:#2d3748;letter-spacing:-0.3px;margin-right:-0.3px;">8 days ago</div>
<div class="r" style="left:1296px;top:1124.0px;width:70.5px;height:18.5px;background:transparent;border:1px solid #e2e8f0;border-radius:4px;box-sizing:border-box;background:#fff;"></div>
<div class="t" style="left:1131.25px;width:400px;text-align:center;top:1128.34px;font-size:12px;color:#d53f8c;letter-spacing:0.05px;">Not in CRM</div>
<div class="t" style="right:54.5px;top:1127.25px;font-size:14px;color:#1a202c;font-weight:700;-webkit-text-stroke:0;">1</div>
<div class="r" style="left:827px;top:1150.0px;width:299px;height:17px;background:rgba(128,90,213,0.1);"></div>
<div class="r" style="left:827px;top:1149.3px;width:299px;height:1.5px;background:#9f7aea;"></div>
<div class="r" style="left:299.5px;top:1127.5px;width:12px;height:12px;background:transparent;"></div>
<div class="r" style="left:275px;top:1201.5px;width:1293.5px;height:136.5px;background:#ffffff;"></div>
<div class="r" style="left:275px;top:1337px;width:1293.5px;height:1px;background:#edf2f7;"></div>
<div class="t" style="right:334.5px;top:1263.50px;font-size:14px;color:#2d3748;letter-spacing:-0.3px;margin-right:-0.3px;">14 hours ago</div>
<div class="r" style="left:1296px;top:1260.25px;width:70.5px;height:18.5px;background:transparent;border:1px solid #e2e8f0;border-radius:4px;box-sizing:border-box;background:#fff;"></div>
<div class="t" style="left:1131.25px;width:400px;text-align:center;top:1264.59px;font-size:12px;color:#d53f8c;letter-spacing:0.05px;">Not in CRM</div>
<div class="t" style="right:54.5px;top:1263.50px;font-size:14px;color:#1a202c;font-weight:700;-webkit-text-stroke:0;">1</div>
<div class="r" style="left:827px;top:1286.25px;width:299px;height:17px;background:rgba(128,90,213,0.1);"></div>
<div class="r" style="left:827px;top:1285.55px;width:299px;height:1.5px;background:#9f7aea;"></div>
<div class="r" style="left:299.5px;top:1263.75px;width:12px;height:12px;background:transparent;"></div>
<div class="r" style="left:275px;top:1338px;width:1293.5px;height:136px;background:#ebf8ff;"></div>
<div class="r" style="left:275px;top:1473px;width:1293.5px;height:1px;background:#edf2f7;"></div>
<div class="t" style="right:334.5px;top:1399.75px;font-size:14px;color:#2d3748;letter-spacing:-0.3px;margin-right:-0.3px;">3 days ago</div>
<div class="r" style="left:1296px;top:1396.5px;width:70.5px;height:18.5px;background:transparent;border:1px solid #d9e2ec;border-radius:4px;box-sizing:border-box;"></div>
<div class="t" style="left:1131.25px;width:400px;text-align:center;top:1400.84px;font-size:12px;color:#d53f8c;letter-spacing:0.05px;">Not in CRM</div>
<div class="t" style="right:54.5px;top:1399.75px;font-size:14px;color:#1a202c;font-weight:700;-webkit-text-stroke:0;">2</div>
<svg class="r" style="left:827.6px;top:1389.1px" width="299" height="54" fill="none"><path d="M1.00,50.00 L10.90,50.00 L20.80,50.00 L30.70,50.00 L40.60,50.00 L50.50,50.00 L60.40,46.10 L70.30,50.00 L80.20,50.00 L90.10,50.00 L100.00,50.00 L109.90,50.00 L119.80,50.00 L129.70,50.00 L139.60,50.00 L149.50,50.00 L159.40,50.00 L169.30,50.00 L179.20,50.00 L189.10,50.00 L199.00,50.00 L208.90,17.60 L218.80,41.30 L228.70,50.00 L238.60,50.00 L248.50,50.00 L258.40,50.00 L268.30,50.00 L278.20,50.00 L288.10,50.00 L298.00,50.00 L298.00,50 L1,50 Z" fill="rgba(128,90,213,0.1)"/><path d="M1.00,50.00 L10.90,50.00 L20.80,50.00 L30.70,50.00 L40.60,50.00 L50.50,50.00 L60.40,46.10 L70.30,50.00 L80.20,50.00 L90.10,50.00 L100.00,50.00 L109.90,50.00 L119.80,50.00 L129.70,50.00 L139.60,50.00 L149.50,50.00 L159.40,50.00 L169.30,50.00 L179.20,50.00 L189.10,50.00 L199.00,50.00 L208.90,17.60 L218.80,41.30 L228.70,50.00 L238.60,50.00 L248.50,50.00 L258.40,50.00 L268.30,50.00 L278.20,50.00 L288.10,50.00 L298.00,50.00" stroke="#9f7aea" stroke-width="1.5" stroke-linejoin="round"/></svg>
<div class="r" style="left:299.5px;top:1400.0px;width:12px;height:12px;background:transparent;"></div>
<div class="r" style="left:275px;top:1474px;width:1293.5px;height:136px;background:#ffffff;"></div>
<div class="r" style="left:275px;top:1609px;width:1293.5px;height:1px;background:#edf2f7;"></div>
<div class="t" style="right:334.5px;top:1535.75px;font-size:14px;color:#2d3748;letter-spacing:-0.3px;margin-right:-0.3px;">7 hours ago</div>
<div class="r" style="left:1296px;top:1532.5px;width:70.5px;height:18.5px;background:transparent;border:1px solid #e2e8f0;border-radius:4px;box-sizing:border-box;background:#fff;"></div>
<div class="t" style="left:1131.25px;width:400px;text-align:center;top:1536.84px;font-size:12px;color:#d53f8c;letter-spacing:0.05px;">Not in CRM</div>
<div class="t" style="right:54.5px;top:1535.75px;font-size:14px;color:#1a202c;font-weight:700;-webkit-text-stroke:0;">2</div>
<svg class="r" style="left:827.6px;top:1525.1px" width="299" height="54" fill="none"><path d="M1.00,50.00 L10.90,50.00 L20.80,50.00 L30.70,50.00 L40.60,26.60 L50.50,47.90 L60.40,44.10 L70.30,18.00 L80.20,32.00 L90.10,50.00 L100.00,50.00 L109.90,50.00 L119.80,50.00 L129.70,50.00 L139.60,50.00 L149.50,50.00 L159.40,50.00 L169.30,50.00 L179.20,50.00 L189.10,50.00 L199.00,50.00 L208.90,50.00 L218.80,50.00 L228.70,50.00 L238.60,50.00 L248.50,50.00 L258.40,50.00 L268.30,50.00 L278.20,50.00 L288.10,50.00 L298.00,50.00 L298.00,50 L1,50 Z" fill="rgba(128,90,213,0.1)"/><path d="M1.00,50.00 L10.90,50.00 L20.80,50.00 L30.70,50.00 L40.60,26.60 L50.50,47.90 L60.40,44.10 L70.30,18.00 L80.20,32.00 L90.10,50.00 L100.00,50.00 L109.90,50.00 L119.80,50.00 L129.70,50.00 L139.60,50.00 L149.50,50.00 L159.40,50.00 L169.30,50.00 L179.20,50.00 L189.10,50.00 L199.00,50.00 L208.90,50.00 L218.80,50.00 L228.70,50.00 L238.60,50.00 L248.50,50.00 L258.40,50.00 L268.30,50.00 L278.20,50.00 L288.10,50.00 L298.00,50.00" stroke="#9f7aea" stroke-width="1.5" stroke-linejoin="round"/></svg>
<div class="r" style="left:299.5px;top:1536.0px;width:12px;height:12px;background:transparent;"></div>
<svg class="r" style="left:298px;top:1398px;" width="15" height="15" viewBox="0 0 24 24" fill="none" stroke="#2d3748" stroke-width="2.2" stroke-linecap="round" stroke-linejoin="round"><path d="M12 6H6a2 2 0 0 0-2 2v10a2 2 0 0 0 2 2h10a2 2 0 0 0 2-2v-6"/><path d="M11 13l9-9"/><path d="M15 4h5v5"/></svg>
<svg class="r" style="left:333px;top:1387px;" width="40" height="39" viewBox="0 0 40 39" fill="none"><path d="M19.8 1 L14.5 4 L14.5 8.5 L8 12.5 L8 21 L1.5 25 L1.5 32.5 L7.5 37 L13.5 34 L19.8 37 L26 34 L32 37 L38.3 32.5 L38.3 25 L31.5 21 L31.5 12.5 L25 8.5 L25 4 Z M19.8 1 L19.8 22 L2 31.5 M19.8 22 L37.8 31.5" stroke="#1a202c" stroke-width="1.7" stroke-linejoin="round" fill="none"/></svg>
<div class="t" style="left:379.5px;top:1393.25px;font-size:14px;color:#1a202c;font-weight:700;-webkit-text-stroke:0;letter-spacing:-0.1px;">Frontify</div>
<div class="t" style="left:379.5px;top:1407.94px;font-size:12px;color:#718096;letter-spacing:0.15px;">frontify.com</div>
<div class="r" style="left:567px;top:1391px;width:29.5px;height:29.5px;background:#e6edf3;border-radius:6px;"></div>
<svg class="r" style="left:576px;top:1401px;" width="11" height="11" viewBox="0 0 11 11" fill="none"><circle cx="4.8" cy="4.8" r="3.6" stroke="#2d3748" stroke-width="1.4"/><path d="M7.4 7.4L9.8 9.8" stroke="#2d3748" stroke-width="1.4" stroke-linecap="round"/></svg>
<div class="t" style="left:612.5px;top:1399.86px;font-size:16px;color:#3182ce;font-weight:700;-webkit-text-stroke:0;">A+</div>
<div class="r" style="left:649.7px;top:1410.4px;width:5.3px;height:5px;background:#fc8181;border-radius:2px;"></div>
<div class="r" style="left:657.2px;top:1406.0px;width:5.3px;height:9.4px;background:#fc8181;border-radius:2px;"></div>
<div class="r" style="left:664.7px;top:1401.4px;width:5.3px;height:14px;background:#fc8181;border-radius:2px;"></div>
<div class="r" style="left:672.2px;top:1396.8px;width:5.3px;height:18.6px;background:#fc8181;border-radius:2px;"></div>
<div class="t" style="left:686.5px;top:1400.05px;font-size:14px;color:#2d3748;letter-spacing:-0.2px;">Very High</div>
<div class="t" style="left:612.5px;top:1536.56px;font-size:16px;color:#3182ce;font-weight:700;-webkit-text-stroke:0;">A+</div>
<div class="r" style="left:649.7px;top:1547.1px;width:5.3px;height:5px;background:#fc8181;border-radius:2px;"></div>
<div class="r" style="left:657.2px;top:1542.7px;width:5.3px;height:9.4px;background:#fc8181;border-radius:2px;"></div>
<div class="r" style="left:664.7px;top:1538.1px;width:5.3px;height:14px;background:#fc8181;border-radius:2px;"></div>
<div class="r" style="left:672.2px;top:1533.5px;width:5.3px;height:18.6px;background:#fc8181;border-radius:2px;"></div>
<div class="t" style="left:686.5px;top:1536.75px;font-size:14px;color:#2d3748;letter-spacing:-0.2px;">Very High</div>
<div class="t" style="left:827px;top:1383.84px;font-size:12px;color:#4a5f80;letter-spacing:-0.1px;"><b style="color:#2a4365">7</b> pages</div>
<svg class="r" style="left:345px;top:1527px;" width="16" height="30" viewBox="0 0 16 30" fill="none"><rect x="1.5" y="0.6" width="4.2" height="24.4" fill="#0d0d0d"/><rect x="8.5" y="0.6" width="4.2" height="24.4" fill="#0d0d0d"/><rect x="5" y="10.5" width="4" height="3.5" fill="#0d0d0d"/><rect x="1" y="27" width="13" height="2.2" fill="#0d0d0d"/></svg>
<div class="t" style="left:379.5px;top:1528.75px;font-size:14px;color:#1a202c;font-weight:700;-webkit-text-stroke:0;letter-spacing:-0.1px;">Huckletree</div>
<div class="t" style="left:379.5px;top:1543.94px;font-size:12px;color:#718096;letter-spacing:0.15px;">huckletree.com</div>
<div class="t" style="left:827px;top:1499.75px;font-size:14px;color:#805ad5;font-weight:700;-webkit-text-stroke:0;letter-spacing:-0.3px;">15m</div>
<div class="t" style="left:827px;top:1519.94px;font-size:12px;color:#4a5f80;letter-spacing:-0.1px;"><b style="color:#2a4365">54</b> pages</div>

<div style="position:absolute;left:0;top:0;width:1600px;height:1597px;">
<div class="r" style="left:153px;top:730px;width:857px;height:656px;background:#fff;border:3px solid rgba(49,130,206,0.6);background-clip:padding-box;border-radius:8px;box-sizing:border-box;"></div>
<div class="r" style="left:575.3px;top:1381px;width:12.2px;height:7px;background:#ffffff;clip-path:polygon(0 0,100% 0,50% 100%);"></div>
<svg class="r" style="left:168.8px;top:743.2px;" width="20.4" height="21.6" viewBox="0 0 34 36" fill="none"><defs><radialGradient id="mb" cx="0.56" cy="0.82" r="0.8"><stop offset="0" stop-color="#fbd6fc"/><stop offset="0.3" stop-color="#e07be6"/><stop offset="0.62" stop-color="#b04bbd"/><stop offset="0.9" stop-color="#6a2a72"/><stop offset="1" stop-color="#4a1f52"/></radialGradient><linearGradient id="mg" x1="0" y1="0" x2="1" y2="0"><stop offset="0" stop-color="#a8681a"/><stop offset="0.25" stop-color="#e8d060"/><stop offset="0.5" stop-color="#9c6a24"/><stop offset="0.75" stop-color="#e6c84a"/><stop offset="1" stop-color="#b08420"/></linearGradient></defs><path d="M9 28.4 L24.5 28.4 L28.5 33.2 Q16.8 35.6 5 33.2 Z" fill="url(#mg)"/><ellipse cx="16.7" cy="15" rx="14.5" ry="14" fill="url(#mb)"/><path d="M13.5 4.3 l0.8 1.3 1.3 0.8 -1.3 0.8 -0.8 1.3 -0.8 -1.3 -1.3 -0.8 1.3 -0.8z" fill="#fff"/><path d="M21.3 5 l1.2 2.2 2.2 1.2 -2.2 1.2 -1.2 2.2 -1.2 -2.2 -2.2 -1.2 2.2 -1.2z" fill="#fff" opacity="0.95"/><circle cx="14.7" cy="14.6" r="1.1" fill="#fff" opacity="0.9"/></svg>
<div class="t" style="left:192.2px;top:745.22px;font-size:19px;color:#1a202c;font-weight:700;-webkit-text-stroke:0;letter-spacing:-0.1px;">Intelligence</div>
<svg class="r" style="left:981px;top:743.5px;" width="12" height="12" viewBox="0 0 12 12" fill="none"><path d="M1.5 1.5L10.5 10.5M10.5 1.5L1.5 10.5" stroke="#1a202c" stroke-width="1.6" stroke-linecap="round"/></svg>
<div class="r" style="left:156.5px;top:772px;width:850.5px;height:1px;background:#e2e8f0;"></div>
<div class="r" style="left:179.5px;top:795.5px;width:391px;height:95px;background:#ebf8ff;"></div>
<div class="r" style="left:179.5px;top:795.5px;width:4px;height:95px;background:#4299e1;"></div>
<div class="t" style="left:200px;top:811.86px;font-size:16px;color:#4299e1;font-weight:700;-webkit-text-stroke:0;">A+</div>
<div class="t" style="left:230.7px;top:813.17px;font-size:13.5px;color:#1a202c;font-weight:700;-webkit-text-stroke:0;letter-spacing:0.0px;">90th percentile of accounts</div>
<div class="t" style="left:203.8px;top:842.97px;font-size:13.5px;color:#2d3748;">•</div>
<div class="t" style="left:215.5px;top:843.94px;font-size:12px;color:#2d3748;letter-spacing:0.1px;">10/39 Traits matched</div>
<div class="t" style="left:203.8px;top:862.07px;font-size:13.5px;color:#2d3748;">•</div>
<div class="t" style="left:215.5px;top:863.04px;font-size:12px;color:#2d3748;letter-spacing:0.16px;">659.2 (product of all traits)</div>
<div class="t" style="left:180.25px;top:922.92px;font-size:13.5px;color:#1a202c;font-weight:700;-webkit-text-stroke:0;">Tech</div>
<div class="r" style="left:193.02px;top:951.3px;width:31.98px;height:14.8px;background:#edf2f7;border-radius:2px;"></div>
<div class="t" style="right:1377.03px;top:953.29px;font-size:12.3px;color:#138a1c;font-weight:700;-webkit-text-stroke:0;font-family:'Liberation Mono', monospace;letter-spacing:-0.72px;">2.4x</div>
<div class="t" style="left:232.5px;top:953.34px;font-size:12px;color:#2d3748;">bing_advertiser</div>
<div class="r" style="left:186.4px;top:974.05px;width:38.6px;height:14.8px;background:#edf2f7;border-radius:2px;"></div>
<div class="t" style="right:1377.03px;top:976.04px;font-size:12.3px;color:#138a1c;font-weight:700;-webkit-text-stroke:0;font-family:'Liberation Mono', monospace;letter-spacing:-0.72px;">1.96x</div>
<div class="t" style="left:232.5px;top:976.09px;font-size:12px;color:#2d3748;">aws_route_53</div>
<div class="r" style="left:186.4px;top:996.8px;width:38.6px;height:14.8px;background:#edf2f7;border-radius:2px;"></div>
<div class="t" style="right:1377.03px;top:998.79px;font-size:12.3px;color:#138a1c;font-weight:700;-webkit-text-stroke:0;font-family:'Liberation Mono', monospace;letter-spacing:-0.72px;">1.93x</div>
<div class="t" style="left:232.5px;top:998.84px;font-size:12px;color:#2d3748;">conversio</div>
<div class="r" style="left:186.4px;top:1019.55px;width:38.6px;height:14.8px;background:#edf2f7;border-radius:2px;"></div>
<div class="t" style="right:1377.03px;top:1021.54px;font-size:12.3px;color:#138a1c;font-weight:700;-webkit-text-stroke:0;font-family:'Liberation Mono', monospace;letter-spacing:-0.72px;">1.74x</div>
<div class="t" style="left:232.5px;top:1021.59px;font-size:12px;color:#2d3748;">facebook_advertiser</div>
<div class="r" style="left:186.4px;top:1042.3px;width:38.6px;height:14.8px;background:#edf2f7;border-radius:2px;"></div>
<div class="t" style="right:1377.03px;top:1044.29px;font-size:12.3px;color:#138a1c;font-weight:700;-webkit-text-stroke:0;font-family:'Liberation Mono', monospace;letter-spacing:-0.72px;">1.57x</div>
<div class="t" style="left:232.5px;top:1044.34px;font-size:12px;color:#2d3748;">google_apps</div>
<div class="t" style="left:180.25px;top:1096.77px;font-size:13.5px;color:#1a202c;font-weight:700;-webkit-text-stroke:0;letter-spacing:-0.05px;">Tech Categories</div>
<div class="r" style="left:186.4px;top:1125.6px;width:38.6px;height:14.8px;background:#edf2f7;border-radius:2px;"></div>
<div class="t" style="right:1377.03px;top:1127.59px;font-size:12.3px;color:#138a1c;font-weight:700;-webkit-text-stroke:0;font-family:'Liberation Mono', monospace;letter-spacing:-0.72px;">2.75x</div>
<div class="t" style="left:232.5px;top:1127.64px;font-size:12px;color:#2d3748;">applicant_tracking_system</div>
<div class="r" style="left:186.4px;top:1148.35px;width:38.6px;height:14.8px;background:#edf2f7;border-radius:2px;"></div>
<div class="t" style="right:1377.03px;top:1150.34px;font-size:12.3px;color:#138a1c;font-weight:700;-webkit-text-stroke:0;font-family:'Liberation Mono', monospace;letter-spacing:-0.72px;">1.54x</div>
<div class="t" style="left:232.5px;top:1150.39px;font-size:12px;color:#2d3748;">dns</div>
<div class="r" style="left:186.4px;top:1171.1px;width:38.6px;height:14.8px;background:#edf2f7;border-radius:2px;"></div>
<div class="t" style="right:1377.03px;top:1173.09px;font-size:12.3px;color:#138a1c;font-weight:700;-webkit-text-stroke:0;font-family:'Liberation Mono', monospace;letter-spacing:-0.72px;">1.48x</div>
<div class="t" style="left:232.5px;top:1173.14px;font-size:12px;color:#2d3748;">advertising</div>
<div class="t" style="left:180.25px;top:1225.67px;font-size:13.5px;color:#1a202c;font-weight:700;-webkit-text-stroke:0;letter-spacing:-0.05px;">Metrics Estimated Annual Revenue</div>
<div class="r" style="left:186.4px;top:1254.4px;width:38.6px;height:14.8px;background:#edf2f7;border-radius:2px;"></div>
<div class="t" style="right:1377.03px;top:1256.39px;font-size:12.3px;color:#138a1c;font-weight:700;-webkit-text-stroke:0;font-family:'Liberation Mono', monospace;letter-spacing:-0.72px;">2.33x</div>
<div class="t" style="left:232.5px;top:1256.44px;font-size:12px;color:#2d3748;">$10M-$50M</div>
<div class="t" style="left:180.25px;top:1308.57px;font-size:13.5px;color:#1a202c;font-weight:700;-webkit-text-stroke:0;letter-spacing:-0.05px;">Metrics Employees Range</div>
<div class="r" style="left:186.4px;top:1337.4px;width:38.6px;height:14.8px;background:#edf2f7;border-radius:2px;"></div>
<div class="t" style="right:1377.03px;top:1339.39px;font-size:12.3px;color:#138a1c;font-weight:700;-webkit-text-stroke:0;font-family:'Liberation Mono', monospace;letter-spacing:-0.72px;">1.82x</div>
<div class="t" style="left:232.5px;top:1339.44px;font-size:12px;color:#2d3748;">251-1K</div>
<div class="r" style="left:593px;top:795.5px;width:390px;height:137px;background:#fff5f5;"></div>
<div class="r" style="left:593px;top:795.5px;width:4px;height:137px;background:#f56565;"></div>
<div class="r" style="left:613.0px;top:824.7px;width:5.3px;height:5px;background:#fc8181;border-radius:2px;"></div>
<div class="r" style="left:620.5px;top:820.3px;width:5.3px;height:9.4px;background:#fc8181;border-radius:2px;"></div>
<div class="r" style="left:628.0px;top:815.7px;width:5.3px;height:14px;background:#fc8181;border-radius:2px;"></div>
<div class="r" style="left:635.5px;top:811.1px;width:5.3px;height:18.6px;background:#fc8181;border-radius:2px;"></div>
<div class="t" style="left:649px;top:814.75px;font-size:14px;color:#2d3748;letter-spacing:-0.2px;">Very High</div>
<div class="t" style="left:716.3px;top:814.75px;font-size:14px;color:#1a202c;font-weight:700;-webkit-text-stroke:0;letter-spacing:-0.15px;">90th percentile</div>
<div class="t" style="left:617.3px;top:846.87px;font-size:13.5px;color:#2d3748;">•</div>
<div class="t" style="left:628.4px;top:847.84px;font-size:12px;color:#2d3748;letter-spacing:0.12px;"><b>2/5</b> Milestones reached</div>
<div class="t" style="left:617.3px;top:865.97px;font-size:13.5px;color:#2d3748;">•</div>
<div class="t" style="left:628.4px;top:866.94px;font-size:12px;color:#2d3748;letter-spacing:0.12px;">Focus Time:</div>
<div class="t" style="left:617.3px;top:884.77px;font-size:13.5px;color:#2d3748;">•</div>
<div class="t" style="left:628.4px;top:885.74px;font-size:12px;color:#2d3748;letter-spacing:0.12px;"><b>5.16x</b> (sum of all milestones)</div>
<div class="t" style="left:617.3px;top:904.07px;font-size:13.5px;color:#2d3748;">•</div>
<div class="t" style="left:628.4px;top:905.04px;font-size:12px;color:#2d3748;letter-spacing:0.12px;"><b>0.18x</b> intent decay from last interaction (3 days ago)</div>
<div class="t" style="left:701.5px;top:866.94px;font-size:12px;color:#2d3748;"><b>13m</b></div>
<div class="t" style="left:733.2px;top:866.94px;font-size:12px;color:#2d3748;letter-spacing:0.1px;">567%</div>
<svg class="r" style="left:769px;top:867px;" width="11" height="8" viewBox="0 0 11 8" fill="none"><path d="M5.5 0.5L10.5 7.5H0.5Z" fill="#48bb78"/></svg>
<svg class="r" style="left:593.6px;top:950.9px" width="390" height="54" fill="none"><path d="M2.00,50.00 L14.85,50.00 L27.70,50.00 L40.55,50.00 L53.40,50.00 L66.25,50.00 L79.10,44.90 L91.95,50.00 L104.80,50.00 L117.65,50.00 L130.50,50.00 L143.35,50.00 L156.20,50.00 L169.05,50.00 L181.90,50.00 L194.75,50.00 L207.60,50.00 L220.45,50.00 L233.30,50.00 L246.15,50.00 L259.00,50.00 L271.85,7.80 L284.70,38.70 L297.55,50.00 L310.40,50.00 L323.25,50.00 L336.10,50.00 L348.95,50.00 L361.80,50.00 L374.65,50.00 L387.50,50.00 L387.50,50 L2,50 Z" fill="rgba(159,122,234,0.12)"/><path d="M2.00,50.00 L14.85,50.00 L27.70,50.00 L40.55,50.00 L53.40,50.00 L66.25,50.00 L79.10,44.90 L91.95,50.00 L104.80,50.00 L117.65,50.00 L130.50,50.00 L143.35,50.00 L156.20,50.00 L169.05,50.00 L181.90,50.00 L194.75,50.00 L207.60,50.00 L220.45,50.00 L233.30,50.00 L246.15,50.00 L259.00,50.00 L271.85,7.80 L284.70,38.70 L297.55,50.00 L310.40,50.00 L323.25,50.00 L336.10,50.00 L348.95,50.00 L361.80,50.00 L374.65,50.00 L387.50,50.00" stroke="#9f7aea" stroke-width="1.6" stroke-linejoin="round"/></svg>
<div class="t" style="left:593px;top:1013.25px;font-size:14px;color:#2d3748;letter-spacing:-0.05px;">Aggregated Focus Time (Month):</div>
<div class="t" style="left:894.4px;top:1013.25px;font-size:14px;color:#1a202c;"><b>13m</b></div>
<div class="t" style="left:930.7px;top:1013.25px;font-size:14px;color:#2d3748;">567%</div>
<svg class="r" style="left:971.5px;top:1014.5px;" width="11" height="9" viewBox="0 0 11 9" fill="none"><path d="M5.5 0.5L10.8 8.5H0.2Z" fill="#48bb78"/></svg>
<svg class="r" style="left:593.6px;top:1037.2px" width="390" height="54" fill="none"><path d="M2.00,50.00 L14.85,50.00 L27.70,50.00 L40.55,50.00 L53.40,50.00 L66.25,50.00 L79.10,39.80 L91.95,50.00 L104.80,50.00 L117.65,50.00 L130.50,50.00 L143.35,50.00 L156.20,50.00 L169.05,50.00 L181.90,50.00 L194.75,50.00 L207.60,50.00 L220.45,50.00 L233.30,50.00 L246.15,39.80 L259.00,48.80 L271.85,39.80 L284.70,8.30 L297.55,50.00 L310.40,50.00 L323.25,50.00 L336.10,50.00 L348.95,50.00 L361.80,50.00 L374.65,50.00 L387.50,50.00 L387.50,50 L2,50 Z" fill="rgba(66,153,225,0.12)"/><path d="M2.00,50.00 L14.85,50.00 L27.70,50.00 L40.55,50.00 L53.40,50.00 L66.25,50.00 L79.10,39.80 L91.95,50.00 L104.80,50.00 L117.65,50.00 L130.50,50.00 L143.35,50.00 L156.20,50.00 L169.05,50.00 L181.90,50.00 L194.75,50.00 L207.60,50.00 L220.45,50.00 L233.30,50.00 L246.15,39.80 L259.00,48.80 L271.85,39.80 L284.70,8.30 L297.55,50.00 L310.40,50.00 L323.25,50.00 L336.10,50.00 L348.95,50.00 L361.80,50.00 L374.65,50.00 L387.50,50.00" stroke="#4299e1" stroke-width="1.6" stroke-linejoin="round"/></svg>
<div class="t" style="left:593px;top:1100.25px;font-size:14px;color:#2d3748;letter-spacing:-0.05px;">Total Page Views (Month):</div>
<div class="t" style="left:922.4px;top:1100.25px;font-size:14px;color:#1a202c;"><b>7</b></div>
<div class="t" style="left:938px;top:1100.25px;font-size:14px;color:#2d3748;">40%</div>
<svg class="r" style="left:971.8px;top:1101.5px;" width="11" height="9" viewBox="0 0 11 9" fill="none"><path d="M5.5 0.5L10.8 8.5H0.2Z" fill="#48bb78"/></svg>
<div class="t" style="left:593px;top:1153.67px;font-size:13.5px;color:#1a202c;font-weight:700;-webkit-text-stroke:0;letter-spacing:-0.05px;">Uniq Page Views</div>
<div class="r" style="left:599.2px;top:1182.1px;width:38.6px;height:14.8px;background:#edf2f7;border-radius:2px;"></div>
<div class="t" style="right:964.23px;top:1184.09px;font-size:12.3px;color:#138a1c;font-weight:700;-webkit-text-stroke:0;font-family:'Liberation Mono', monospace;letter-spacing:-0.72px;">2.83x</div>
<div class="t" style="left:646px;top:1184.14px;font-size:12px;color:#2d3748;">/integrations</div>
<div class="r" style="left:599.2px;top:1204.6px;width:38.6px;height:14.8px;background:#edf2f7;border-radius:2px;"></div>
<div class="t" style="right:964.23px;top:1206.59px;font-size:12.3px;color:#138a1c;font-weight:700;-webkit-text-stroke:0;font-family:'Liberation Mono', monospace;letter-spacing:-0.72px;">2.33x</div>
<div class="t" style="left:646px;top:1206.64px;font-size:12px;color:#2d3748;">/pricing</div>
<div class="r" style="left:1503.5px;top:-1px;width:100px;height:20.5px;background:#fff;border:1px solid #9a9a9a;border-radius:0 0 0 6px;box-sizing:border-box;"></div>
<div class="t" style="left:1511.5px;top:3.44px;font-size:12px;color:#222;font-family:'Liberation Mono', monospace;letter-spacing:-0.62px;">1653.6</div>
<div class="t" style="left:1555px;top:4.09px;font-size:11px;color:#888;font-family:'Liberation Mono', monospace;">ms</div>
<div class="t" style="left:1574.5px;top:4.94px;font-size:10px;color:#666;font-family:'Liberation Mono', monospace;">×18</div>
<div class="r" style="left:1598.5px;top:0px;width:1.5px;height:1597px;background:#a8a8a8;"></div>
</div>
</div>
<div class="corner" style="left:0;bottom:0;background:radial-gradient(circle at 10px 0, transparent 9.5px, #d6d6d6 10.5px);"></div>
<div class="corner" style="right:0;bottom:0;background:radial-gradient(circle at 0 0, transparent 9.5px, #d6d6d6 10.5px);"></div>
</body></html>
